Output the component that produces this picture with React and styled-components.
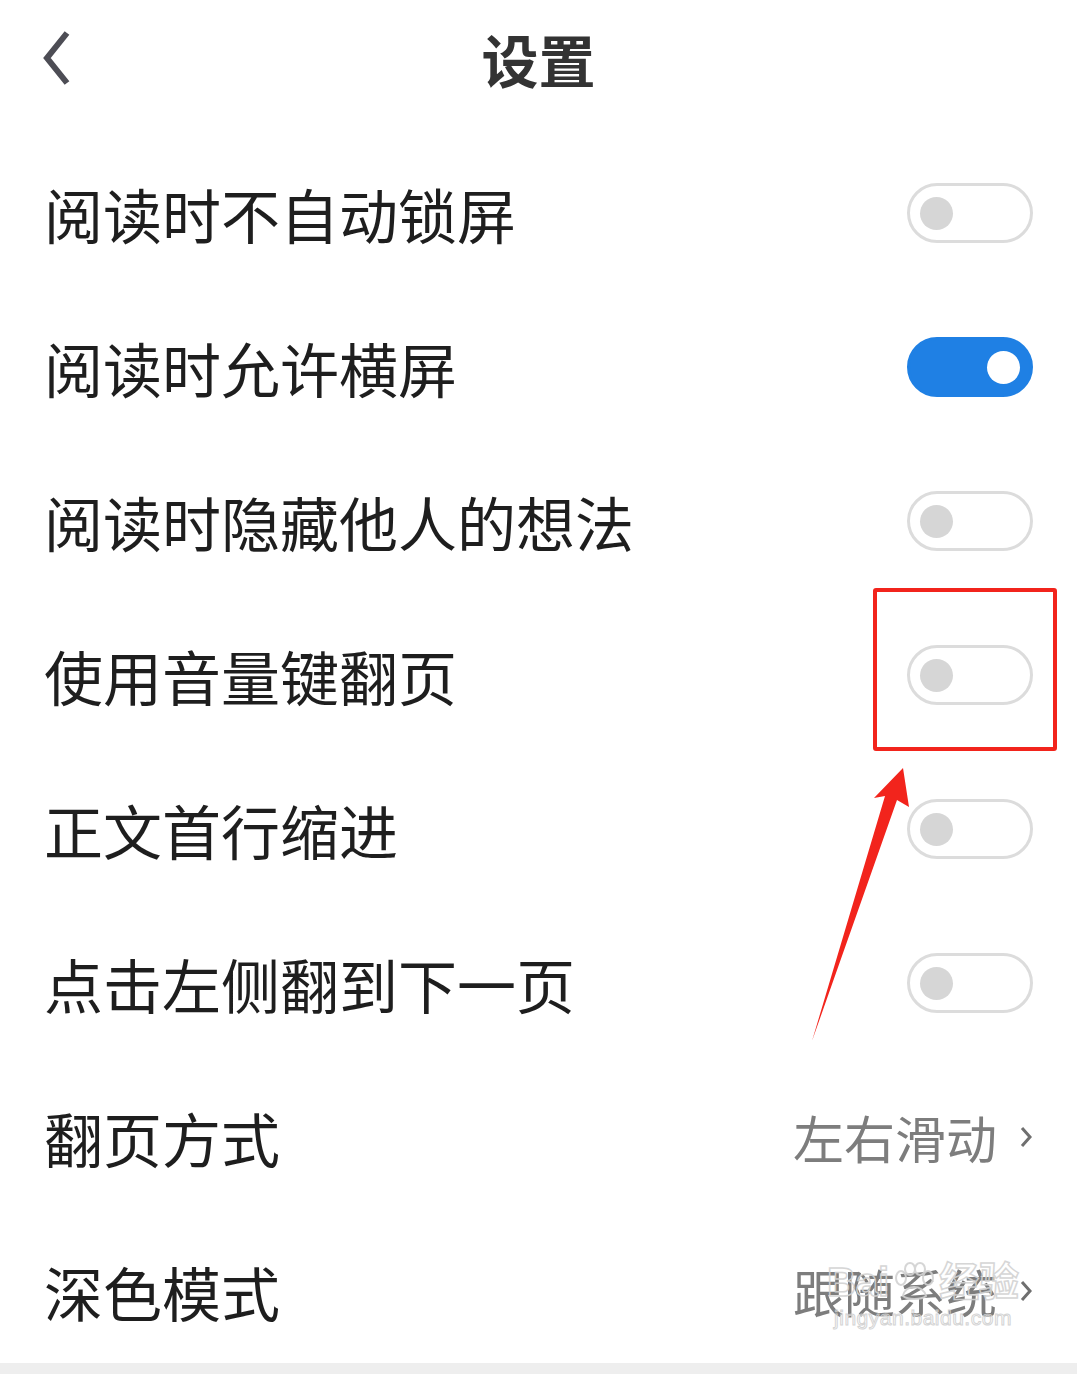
import React from "react";
import styled, { createGlobalStyle } from "styled-components";

const GlobalStyle = createGlobalStyle`
  body {
    margin: 0;
    background: #fff;
    font-family: "Noto Sans CJK SC", "Noto Sans", sans-serif;
  }
`;

const settings = [
  { name: "阅读时不自动锁屏", on: false },
  { name: "阅读时允许横屏", on: true },
  { name: "阅读时隐藏他人的想法", on: false },
  { name: "使用音量键翻页", on: false },
  { name: "正文首行缩进", on: false },
  { name: "点击左侧翻到下一页", on: false },
  { name: "翻页方式", value: "左右滑动" },
  { name: "深色模式", value: "跟随系统" },
];

export default function App() {
  return (
    <Page>
      <GlobalStyle />
      <Header>
        <BackButton>
          <svg width="34" height="58" viewBox="0 0 34 58">
            <polyline
              points="25,3 5,28 25,53"
              fill="none"
              stroke="#4d4d55"
              strokeWidth="6"
              strokeLinejoin="miter"
            />
          </svg>
        </BackButton>
        <Title>设置</Title>
      </Header>

      <List>
        {settings.map((item) => (
          <Row key={item.name}>
            <Label>{item.name}</Label>
            {item.value ? (
              <Value>
                {item.value}
                <svg width="14" height="26" viewBox="0 0 14 26">
                  <polyline
                    points="3,4 11,13 3,22"
                    fill="none"
                    stroke="#6f6f6f"
                    strokeWidth="3"
                  />
                </svg>
              </Value>
            ) : (
              <Switch $on={item.on}>
                <Knob $on={item.on} />
              </Switch>
            )}
          </Row>
        ))}
      </List>

      <BottomBar />

      {/* annotation drawn over the screenshot */}
      <Highlight />
      <Arrow width="1077" height="1374" viewBox="0 0 1077 1374">
        <polygon
          points="903,768 909,807 897,800 812,1041 885,796 874,798"
          fill="#f2241c"
        />
      </Arrow>

      <Watermark>
        <WmLogo>
          Bai
          <svg width="46" height="40" viewBox="0 0 46 40">
            <g fill="none" stroke="#d2d2d2" strokeWidth="2">
              <ellipse cx="10" cy="16" rx="5" ry="7" />
              <ellipse cx="19" cy="7" rx="5" ry="6" />
              <ellipse cx="29" cy="7" rx="5" ry="6" />
              <ellipse cx="37" cy="16" rx="5" ry="7" />
              <path d="M12 34 C14 22, 32 22, 35 34 C30 38, 17 38, 12 34 Z" />
            </g>
          </svg>
          经验
        </WmLogo>
        <WmUrl>jingyan.baidu.com</WmUrl>
      </Watermark>
    </Page>
  );
}

const Page = styled.div`
  position: relative;
  width: 1077px;
  height: 1374px;
  overflow: hidden;
  background: #fff;
`;

const Header = styled.div`
  position: relative;
  height: 116px;
  display: flex;
  align-items: center;
  justify-content: center;
`;

const BackButton = styled.div`
  position: absolute;
  left: 42px;
  top: 30px;
  display: flex;
`;

const Title = styled.div`
  font-size: 57px;
  font-weight: 700;
  color: #333;
  line-height: 1;
`;

const List = styled.div`
  padding-top: 20px;
  display: flex;
  flex-direction: column;
`;

const Row = styled.div`
  height: 154px;
  display: flex;
  align-items: center;
  justify-content: space-between;
  padding: 0 44px 0 44px;
`;

const Label = styled.div`
  font-size: 59px;
  font-weight: 400;
  color: #1e1e1e;
  line-height: 1;
`;

const Value = styled.div`
  display: flex;
  align-items: center;
  gap: 22px;
  font-size: 51px;
  color: #7d7d7d;
  line-height: 1;
`;

const Switch = styled.div`
  box-sizing: border-box;
  width: 126px;
  height: 60px;
  border-radius: 30px;
  border: 3px solid ${(p) => (p.$on ? "#1f80e4" : "#dcdcdc")};
  background: ${(p) => (p.$on ? "#1f80e4" : "#fff")};
  display: flex;
  align-items: center;
  justify-content: ${(p) => (p.$on ? "flex-end" : "flex-start")};
  padding: 0 10px;
`;

const Knob = styled.div`
  width: 33px;
  height: 33px;
  border-radius: 50%;
  background: ${(p) => (p.$on ? "#fff" : "#d6d6d6")};
`;

const BottomBar = styled.div`
  position: absolute;
  left: 0;
  right: 0;
  bottom: 0;
  height: 11px;
  background: #eeeeee;
`;

const Highlight = styled.div`
  position: absolute;
  left: 873px;
  top: 588px;
  width: 184px;
  height: 163px;
  box-sizing: border-box;
  border: 4px solid #f2241c;
  border-radius: 3px;
`;

const Arrow = styled.svg`
  position: absolute;
  left: 0;
  top: 0;
  pointer-events: none;
`;

const Watermark = styled.div`
  position: absolute;
  left: 818px;
  top: 1262px;
  width: 210px;
  display: flex;
  flex-direction: column;
  align-items: center;
  opacity: 0.9;
`;

const WmLogo = styled.div`
  display: flex;
  align-items: flex-end;
  font-family: "Liberation Sans", "Noto Sans CJK SC", sans-serif;
  font-size: 40px;
  font-weight: 700;
  color: transparent;
  -webkit-text-stroke: 1.5px #d2d2d2;
  line-height: 1;
  gap: 2px;
`;

const WmUrl = styled.div`
  margin-top: 4px;
  font-family: "Liberation Sans", sans-serif;
  font-size: 21px;
  color: transparent;
  -webkit-text-stroke: 1px #d0d0d0;
  letter-spacing: 0.5px;
`;
